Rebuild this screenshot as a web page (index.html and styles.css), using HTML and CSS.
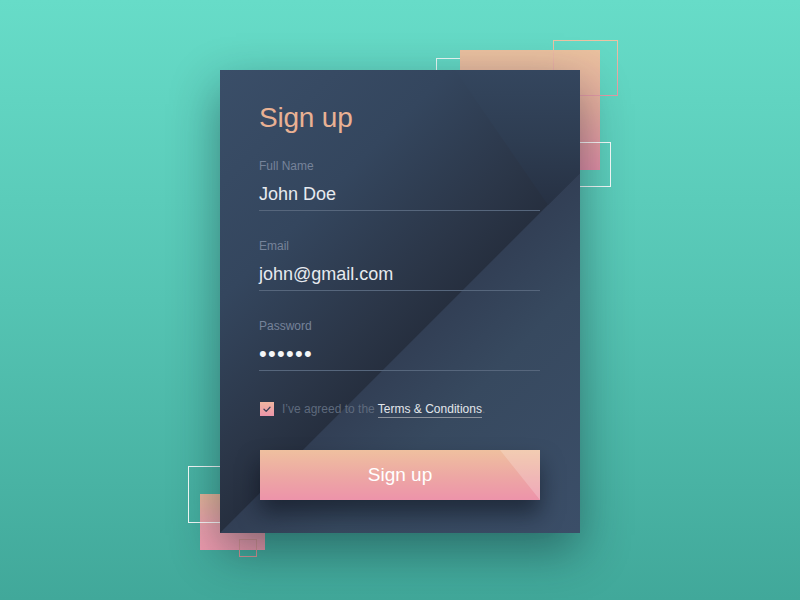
FILE: index.html
```html
<!DOCTYPE html>
<html>
<head>
<meta charset="utf-8">
<link rel="stylesheet" href="styles.css">
</head>
<body>
<div class="stage">
  <div class="deco sq-white-tl"></div>
  <div class="deco sq-pink-top"></div>
  <div class="deco sq-outline-peach"></div>
  <div class="deco sq-white-r"></div>
  <div class="deco sq-pink-bl"></div>
  <div class="deco sq-white-bl"></div>
  <div class="deco sq-small"></div>

  <form class="card">
    <div class="card-fold"></div>
    <h1 class="title">Sign up</h1>
    <div class="field">
      <div class="label">Full Name</div>
      <div class="value">John Doe</div>
    </div>
    <div class="field">
      <div class="label">Email</div>
      <div class="value">john@gmail.com</div>
    </div>
    <div class="field">
      <div class="label">Password</div>
      <div class="value dots">••••••</div>
    </div>
    <div class="agree">
      <span class="check">
        <svg width="14" height="14" viewBox="0 0 14 14"><polyline points="4,7.3 6.2,9.4 10,5.3" fill="none" stroke="#3f4257" stroke-width="1.3" stroke-linecap="round" stroke-linejoin="round"/></svg>
      </span>
      <span class="agree-text">I’ve agreed to the <span class="terms">Terms &amp; Conditions</span>.</span>
    </div>
    <div class="btn"><span class="btn-shine"></span><span class="btn-label">Sign up</span></div>
  </form>
</div>
</body>
</html>
```

FILE: styles.css
```css
html, body {
  margin: 0;
  padding: 0;
}
body {
  width: 800px;
  height: 600px;
  overflow: hidden;
  background: linear-gradient(180deg, #67dcc8 0%, #55c4b3 50%, #41a89a 100%);
  font-family: "Liberation Sans", Arial, sans-serif;
}
.stage {
  position: relative;
  width: 800px;
  height: 600px;
  padding-top: 70px;
  box-sizing: border-box;
}
.deco {
  position: absolute;
  box-sizing: border-box;
}
.sq-pink-top {
  left: 460px; top: 50px; width: 140px; height: 120px;
  background: linear-gradient(180deg, #eac19f 0%, #e7ac9f 50%, #e28ea6 100%);
}
.sq-outline-peach {
  left: 553px; top: 40px; width: 65px; height: 56px;
  border: 1px solid;
  border-image: linear-gradient(180deg, #edc3a3, #e399a5) 1;
}
.sq-white-tl {
  left: 436px; top: 58px; width: 51px; height: 60px;
  border: 1.5px solid rgba(255,255,255,0.85);
}
.sq-white-r {
  left: 540px; top: 142px; width: 71px; height: 45px;
  border: 1.5px solid rgba(255,255,255,0.95);
}
.sq-white-bl {
  left: 188px; top: 466px; width: 60px; height: 57px;
  border: 1.5px solid rgba(255,255,255,0.95);
}
.sq-pink-bl {
  left: 200px; top: 494px; width: 65px; height: 56px;
  background: linear-gradient(180deg, #e6b79b 0%, #eca0ad 60%, #ee9aae 100%);
}
.sq-small {
  left: 239px; top: 539px; width: 18px; height: 18px;
  border: 1px solid #db9495;
}

.card {
  position: relative;
  z-index: 2;
  display: block;
  width: 360px;
  height: 463px;
  margin: 0 auto;
  padding: 32px 40px 0 39px;
  box-sizing: border-box;
  background: linear-gradient(135deg, #3a4e68 0%, #34465e 28%, #2b3648 48%, #262f3f 56.2%, #323f55 56.3%, #37495f 70%, #3b4e68 100%);
  box-shadow: 0 18px 45px rgba(10, 30, 40, 0.45);
}
.card-fold {
  position: absolute;
  left: 0; top: 0; width: 360px; height: 140px;
  background: linear-gradient(180deg, #34465e 0%, #2e3d52 50%, #263042 100%);
  clip-path: polygon(235px 0, 360px 0, 360px 103px, 328px 135px);
  z-index: 0;
}
.title, .field, .agree, .btn {
  position: relative;
  z-index: 1;
}
.title {
  margin: 0;
  font-size: 28px;
  line-height: 32px;
  font-weight: normal;
  color: #e9b193;
  letter-spacing: -0.2px;
}
.field {
  margin-top: 25px;
  width: 281px;
}
.field + .field {
  margin-top: 28px;
}
.label {
  font-size: 12px;
  line-height: 14px;
  color: #76839a;
}
.value {
  margin-top: 10px;
  font-size: 18px;
  line-height: 22px;
  color: #e6eaef;
  padding-bottom: 5px;
  border-bottom: 1px solid #56667c;
}
.value.dots {
  font-size: 22px;
  letter-spacing: 1.3px;
  color: #f4f6f8;
}
.agree {
  display: flex;
  align-items: flex-start;
  margin-top: 31px;
  margin-left: 1px;
  height: 14px;
}
.check {
  width: 14px;
  height: 14px;
  background: linear-gradient(180deg, #efb5a0, #eb95a9);
  display: block;
}
.check svg {
  display: block;
}
.agree-text {
  margin-left: 8px;
  font-size: 12px;
  line-height: 14px;
  color: #5e6a7d;
}
.terms {
  color: #e2e6eb;
  padding-bottom: 1px;
  border-bottom: 1px solid #8c929c;
}
.btn {
  margin-top: 34px;
  margin-left: 1px;
  width: 280px;
  height: 50px;
  background: linear-gradient(180deg, #efc09f 0%, #eda6a4 55%, #ed93aa 100%);
  box-shadow: 0 14px 22px rgba(8, 12, 22, 0.5);
  display: flex;
  align-items: center;
  justify-content: center;
  overflow: hidden;
}
.btn-shine {
  position: absolute;
  left: 240px; top: 0; width: 40px; height: 50px;
  background: rgba(255, 255, 255, 0.2);
  clip-path: polygon(0 0, 40px 0, 40px 50px);
}
.btn-label {
  position: relative;
  font-size: 19px;
  color: #ffffff;
}
```
